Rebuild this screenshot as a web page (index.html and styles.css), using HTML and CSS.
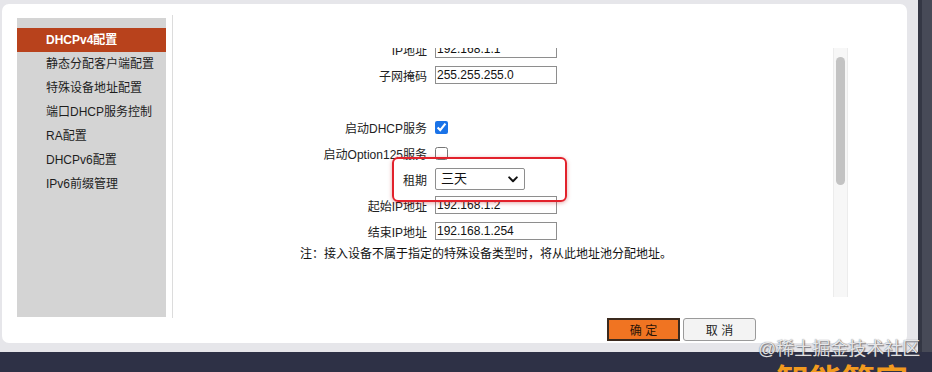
FILE: index.html
```html
<!DOCTYPE html>
<html lang="zh-CN">
<head>
<meta charset="utf-8">
<title>DHCPv4配置</title>
<link rel="stylesheet" href="styles.css">
</head>
<body>
<div class="screen">
  <div class="top">
    <div class="panel">
      <div class="side-wrap">
        <ul class="sidebar">
          <li class="item active">DHCPv4配置</li>
          <li class="item">静态分配客户端配置</li>
          <li class="item">特殊设备地址配置</li>
          <li class="item">端口DHCP服务控制</li>
          <li class="item">RA配置</li>
          <li class="item">DHCPv6配置</li>
          <li class="item">IPv6前缀管理</li>
        </ul>
      </div>
      <div class="divider"></div>
      <div class="main">
        <div class="frame">
          <div class="frame-content">
            <div class="form">
              <div class="row"><span class="label">IP地址</span><span class="input">192.168.1.1</span></div>
              <div class="row"><span class="label">子网掩码</span><span class="input">255.255.255.0</span></div>
              <div class="row"></div>
              <div class="row"><span class="label">启动DHCP服务</span><input class="check" type="checkbox" checked></div>
              <div class="row"><span class="label">启动Option125服务</span><input class="check" type="checkbox"></div>
              <div class="row"><span class="label">租期</span>
                <span class="select">三天
                  <svg class="chev" width="10" height="7" viewBox="0 0 10 7"><path d="M1.2 1.4 L5 5.2 L8.8 1.4" fill="none" stroke="#111" stroke-width="2" stroke-linecap="round" stroke-linejoin="round"/></svg>
                </span>
              </div>
              <div class="row"><span class="label">起始IP地址</span><span class="input">192.168.1.2</span></div>
              <div class="row"><span class="label">结束IP地址</span><span class="input">192.168.1.254</span></div>
              <div class="note">注：接入设备不属于指定的特殊设备类型时，将从此地址池分配地址。</div>
            </div>
          </div>
          <div class="scrollbar"><div class="thumb"></div></div>
        </div>
        <div class="buttons">
          <button class="btn ok">确 定</button>
          <button class="btn cancel">取 消</button>
        </div>
      </div>
      <div class="highlight"></div>
    </div>
    <div class="gap"></div>
    <div class="band"></div>
  </div>
  <div class="footer"><span class="brand">智能管家</span></div>
  <div class="watermark">@稀土掘金技术社区</div>
</div>
</body>
</html>
```
FILE: styles.css
```css
* { box-sizing: border-box; }
html, body { margin: 0; padding: 0; }
body {
  width: 932px;
  height: 372px;
  overflow: hidden;
  background: #e6e6ea;
  font-family: "Liberation Sans", "Noto Sans CJK SC", sans-serif;
  font-size: 12px;
  color: #222;
}
.screen {
  position: relative;
  width: 932px;
  height: 372px;
  display: flex;
  flex-direction: column;
}
.top {
  display: flex;
  height: 352px;
}
.panel {
  position: relative;
  margin: 4px 0 9px 2px;
  width: 905px;
  height: 339px;
  background: #fff;
  border-radius: 7px;
  display: flex;
}
.gap { width: 11px; }
.band {
  width: 14px;
  background: linear-gradient(to right, #343744 0, #343744 4px, #474a57 4px);
}
.side-wrap {
  padding: 14px 0 0 15px;
}
.sidebar {
  list-style: none;
  margin: 0;
  padding: 10px 0 0;
  width: 149px;
  height: 299px;
  background: #d4d4d4;
}
.item {
  height: 24px;
  line-height: 24px;
  padding-left: 29px;
  font-size: 12px;
  color: #1e1e1e;
}
.item.active {
  background: #b8421c;
  color: #fff;
  font-weight: bold;
}
.divider {
  margin: 11px 0 0 6px;
  width: 1px;
  height: 303px;
  background: #dcdcdc;
}
.main {
  margin-left: 2px;
  display: flex;
  flex-direction: column;
}
.frame {
  margin-top: 44px;
  width: 673px;
  height: 249px;
  overflow: hidden;
  display: flex;
}
.frame-content {
  width: 658px;
  height: 249px;
  overflow: hidden;
}
.form {
  margin-top: -12px;
}
.row {
  height: 26px;
  display: flex;
  align-items: center;
}
.label {
  width: 260px;
  padding-right: 8px;
  text-align: right;
  white-space: nowrap;
}
.input {
  width: 122px;
  height: 18px;
  border: 1px solid #8e8e8e;
  line-height: 16px;
  padding-left: 1px;
  color: #111;
}
.check {
  margin: 0;
  width: 13px;
  height: 13px;
  accent-color: #1a73e8;
}
.select {
  position: relative;
  width: 90px;
  height: 22px;
  border: 1px solid #8e8e8e;
  border-radius: 2px;
  padding-left: 5px;
  line-height: 20px;
  font-size: 13px;
  color: #111;
}
.chev {
  position: absolute;
  right: 6px;
  top: 7px;
}
.note {
  height: 20px;
  line-height: 20px;
  padding-left: 125px;
  color: #111;
}
.scrollbar {
  width: 15px;
  height: 249px;
  background: #f7f7f7;
  border-left: 1px solid #ececec;
  border-right: 1px solid #ececec;
  padding: 9px 0 0 2px;
}
.thumb {
  width: 9px;
  height: 128px;
  background: #c3c3c3;
  border-radius: 5px;
}
.buttons {
  margin: 21px 0 0 432px;
  display: flex;
  gap: 3px;
}
.btn {
  width: 73px;
  height: 23px;
  padding: 0;
  font-family: "Liberation Sans", "Noto Sans CJK SC", sans-serif;
  font-size: 12px;
  cursor: pointer;
}
.btn.ok {
  background: #f07422;
  border: 2px solid #3b2a1e;
  color: #2a1508;
}
.btn.cancel {
  background: #f3f3f3;
  border: 1px solid #9a9a9a;
  border-radius: 3px;
  color: #1e1e1e;
}
.highlight {
  position: absolute;
  left: 390px;
  top: 153px;
  width: 175px;
  height: 45px;
  border: 2.5px solid #e2222c;
  border-radius: 6px;
  box-shadow: 0 1px 4px rgba(180, 0, 0, 0.35);
}
.footer {
  height: 20px;
  background: #2e3146;
  overflow: hidden;
  position: relative;
}
.brand {
  position: absolute;
  left: 776px;
  top: 13px;
  font-size: 33px;
  font-weight: bold;
  color: #f29a1e;
  line-height: 33px;
}
.watermark {
  position: absolute;
  left: 758px;
  top: 338px;
  font-size: 18px;
  line-height: 22px;
  color: rgba(255, 255, 255, 0.85);
  text-shadow: 0 0 1px rgba(60, 60, 70, 0.8), 1px 1px 1px rgba(60, 60, 70, 0.6);
  white-space: nowrap;
}
```
